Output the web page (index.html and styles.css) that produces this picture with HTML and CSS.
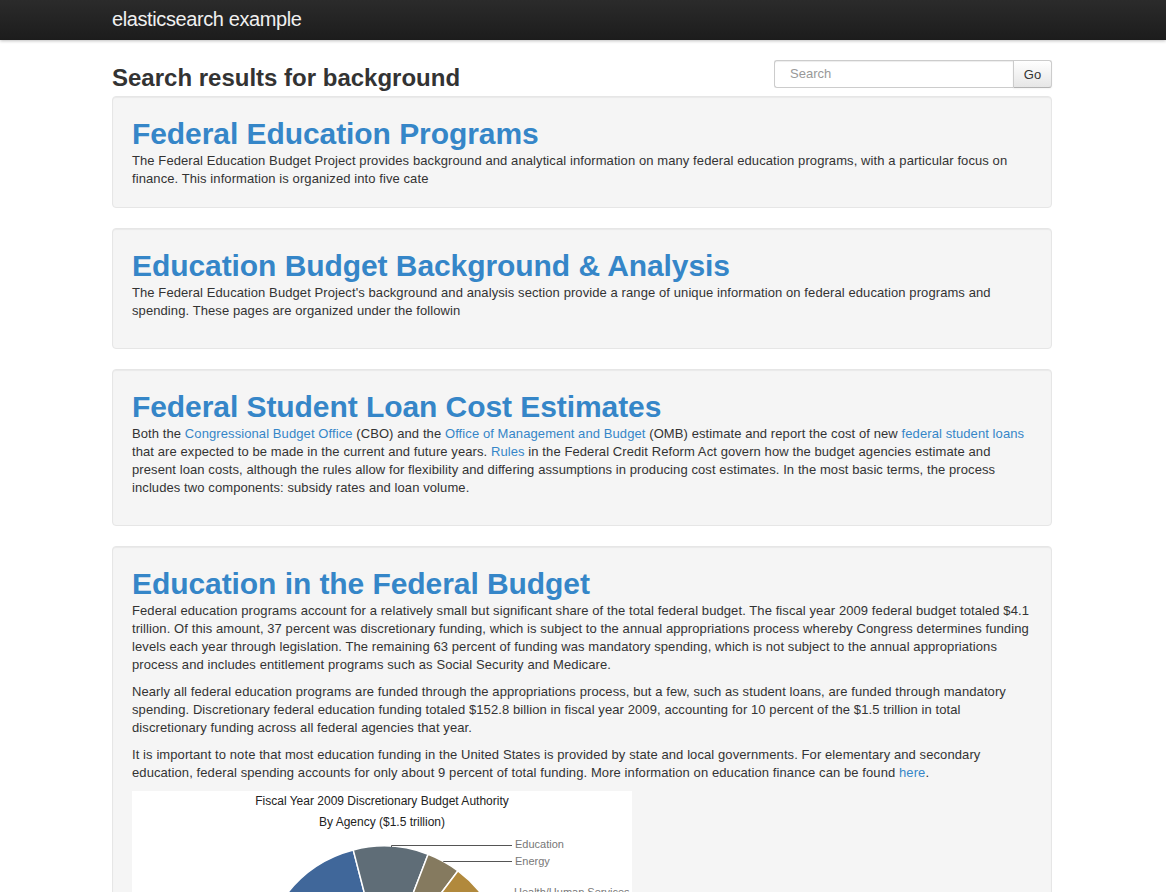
FILE: index.html
```html
<!DOCTYPE html>
<html lang="en">
<head>
<meta charset="utf-8">
<title>elasticsearch example</title>
<link rel="stylesheet" href="styles.css">
</head>
<body>
<div class="navbar">
  <div class="container nav-inner">
    <a class="brand" href="#">elasticsearch example</a>
  </div>
</div>

<div class="container main">
  <div class="page-head">
    <h2 class="results-title">Search results for background</h2>
    <form class="search-form">
      <input class="search-input" type="text" placeholder="Search">
      <button class="search-btn" type="button">Go</button>
    </form>
  </div>

  <div class="well">
    <h1 class="result-title"><a href="#">Federal Education Programs</a></h1>
    <div class="snippet">The Federal Education Budget Project provides background and analytical information on many federal education programs, with a particular focus on finance. This information is organized into five cate</div>
  </div>

  <div class="well">
    <h1 class="result-title"><a href="#">Education Budget Background &amp; Analysis</a></h1>
    <p>The Federal Education Budget Project's background and analysis section provide a range of unique information on federal education programs and spending. These pages are organized under the followin</p>
  </div>

  <div class="well">
    <h1 class="result-title"><a href="#">Federal Student Loan Cost Estimates</a></h1>
    <p>Both the <a href="#">Congressional Budget Office</a> (CBO) and the <a href="#">Office of Management and Budget</a> (OMB) estimate and report the cost of new <a href="#">federal student loans</a> that are expected to be made in the current and future years. <a href="#">Rules</a> in the Federal Credit Reform Act govern how the budget agencies estimate and present loan costs, although the rules allow for flexibility and differing assumptions in producing cost estimates. In the most basic terms, the process includes two components: subsidy rates and loan volume.</p>
  </div>

  <div class="well">
    <h1 class="result-title"><a href="#">Education in the Federal Budget</a></h1>
    <p>Federal education programs account for a relatively small but significant share of the total federal budget. The fiscal year 2009 federal budget totaled $4.1 trillion. Of this amount, 37 percent was discretionary funding, which is subject to the annual appropriations process whereby Congress determines funding levels each year through legislation. The remaining 63 percent of funding was mandatory spending, which is not subject to the annual appropriations process and includes entitlement programs such as Social Security and Medicare.</p>
    <p>Nearly all federal education programs are funded through the appropriations process, but a few, such as student loans, are funded through mandatory spending. Discretionary federal education funding totaled $152.8 billion in fiscal year 2009, accounting for 10 percent of the $1.5 trillion in total discretionary funding across all federal agencies that year.</p>
    <p>It is important to note that most education funding in the United States is provided by state and local governments. For elementary and secondary education, federal spending accounts for only about 9 percent of total funding. More information on education finance can be found <a href="#">here</a>.</p>
    <div class="chart">
      <div class="chart-title">Fiscal Year 2009 Discretionary Budget Authority</div>
      <div class="chart-sub">By Agency ($1.5 trillion)</div>
      <svg class="chart-svg" width="500" height="260" viewBox="0 0 500 260" xmlns="http://www.w3.org/2000/svg">
        <g stroke="#ffffff" stroke-width="1.5" stroke-linejoin="round">
          <path d="M252,178 L252,301 A123,123 0 0 1 129,178 Z" fill="#2f5688"/>
          <path d="M252,178 L129,178 A123,123 0 0 1 221.2,58.9 Z" fill="#40679a"/>
          <path d="M252,178 L221.2,58.9 A123,123 0 0 1 296.1,63.2 Z" fill="#5f6d77"/>
          <path d="M252,178 L296.1,63.2 A123,123 0 0 1 326,79.8 Z" fill="#857a5f"/>
          <path d="M252,178 L326,79.8 A123,123 0 0 1 375,178 Z" fill="#b1893c"/>
          <path d="M252,178 L375,178 A123,123 0 0 1 252,301 Z" fill="#9a4f3a"/>
        </g>
        <g fill="none" stroke="#555" stroke-width="1">
          <path d="M259.5,56 L259.5,54.5 L380,54.5"/>
          <path d="M311.5,71 L311.5,70.5 L380,70.5"/>
        </g>
      </svg>
      <span class="chart-label lbl-edu">Education</span>
      <span class="chart-label lbl-energy">Energy</span>
      <span class="chart-label lbl-hhs">Health/Human Services</span>
    </div>
  </div>
</div>
</body>
</html>
```

FILE: styles.css
```css
* { box-sizing: border-box; }

html, body {
  margin: 0;
  padding: 0;
  background: #ffffff;
}

body {
  font-family: "Liberation Sans", Arial, Helvetica, sans-serif;
  font-size: 13px;
  line-height: 18px;
  color: #333333;
}

a {
  color: #3586c8;
  text-decoration: none;
}

.container {
  width: 942px;
  margin: 0 auto;
  padding-right: 2px;
  box-sizing: border-box;
}

/* navbar */
.navbar {
  height: 40px;
  background: linear-gradient(to bottom, #2b2b2b, #1c1c1c);
  box-shadow: 0 1px 3px rgba(0, 0, 0, 0.25);
  position: relative;
  z-index: 2;
}

.nav-inner {
  height: 40px;
  display: flex;
  align-items: center;
}

.brand {
  color: #f0f0f0;
  font-size: 20px;
  line-height: 20px;
  letter-spacing: -0.4px;
  padding-bottom: 2px;
}

/* main */
.main {
  padding-top: 20px;
}

.page-head {
  display: flex;
  justify-content: space-between;
  align-items: flex-start;
}

.results-title {
  margin: 0;
  font-size: 24px;
  line-height: 36px;
  font-weight: bold;
  color: #333;
}

.search-form {
  display: flex;
  margin: 0;
}

.search-input {
  width: 239px;
  height: 28px;
  margin: 0;
  padding: 3px 15px 5px;
  font-family: "Liberation Sans", Arial, sans-serif;
  font-size: 13px;
  color: #555;
  border: 1px solid #cccccc;
  border-right: 0;
  border-radius: 3px 0 0 3px;
  box-shadow: inset 0 1px 1px rgba(0, 0, 0, 0.075);
  outline: none;
}

.search-input::placeholder {
  color: #999;
}

.search-btn {
  width: 39px;
  height: 28px;
  margin: 0;
  padding: 0;
  font-family: "Liberation Sans", Arial, sans-serif;
  font-size: 13px;
  color: #333;
  background: linear-gradient(to bottom, #ffffff, #e6e6e6);
  border: 1px solid #cccccc;
  border-bottom-color: #b3b3b3;
  border-radius: 0 3px 3px 0;
  box-shadow: inset 0 1px 0 rgba(255, 255, 255, 0.2), 0 1px 2px rgba(0, 0, 0, 0.05);
}

/* wells */
.well {
  min-height: 20px;
  padding: 19px;
  margin-bottom: 20px;
  background: #f5f5f5;
  border: 1px solid #e6e6e6;
  border-radius: 4px;
  box-shadow: inset 0 1px 1px rgba(0, 0, 0, 0.05);
  letter-spacing: 0.09px;
}

.result-title {
  margin: 0;
  font-size: 30px;
  line-height: 36px;
  font-weight: bold;
  letter-spacing: -0.07px;
}

.well p {
  margin: 0 0 9px;
}

.snippet {
  margin: 0;
}

/* chart */
.chart {
  position: relative;
  width: 500px;
  height: 300px;
  background: #ffffff;
  overflow: hidden;
  letter-spacing: 0;
}

.chart-title {
  text-align: center;
  font-size: 12px;
  line-height: 14px;
  color: #222;
  padding-top: 3px;
}

.chart-sub {
  text-align: center;
  font-size: 12px;
  line-height: 14px;
  color: #222;
  padding-top: 7px;
}

.chart-svg {
  position: absolute;
  left: 0;
  top: 0;
  display: block;
}

.chart-label {
  position: absolute;
  font-size: 11px;
  line-height: 13px;
  color: #777;
}

.lbl-edu { left: 383px; top: 47px; }
.lbl-energy { left: 383px; top: 64px; }
.lbl-hhs { left: 382px; top: 95px; }
```
